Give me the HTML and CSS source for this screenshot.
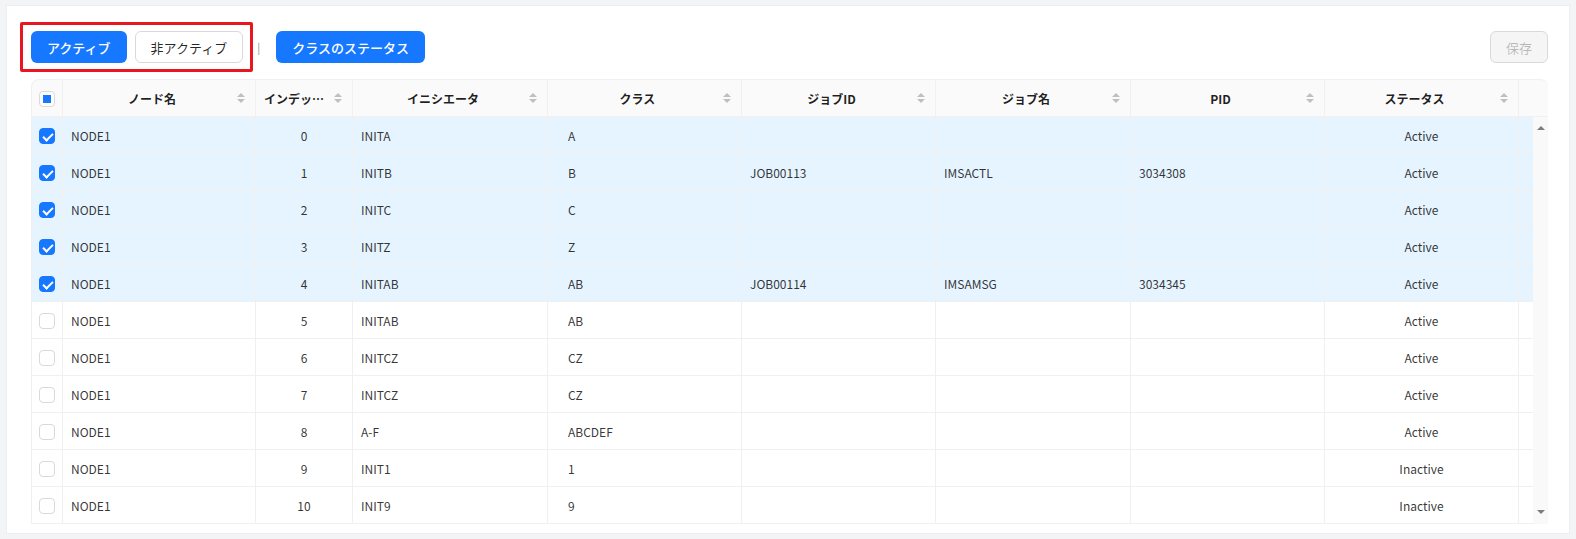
FILE: index.html
```html
<!DOCTYPE html>
<html lang="ja">

<head>
    <meta charset="UTF-8">
    <meta name="viewport" content="width=device-width, initial-scale=1.0">
    <title>イニシエータ一覧</title>
    <link rel="stylesheet" href="styles.css">
</head>

<body>
    <div class="card">
        <div class="toolbar">
            <div class="focus-group">
                <button class="btn btn-primary">アクティブ</button>
                <button class="btn btn-default">非アクティブ</button>
            </div>
            <span class="divider">|</span>
            <button class="btn btn-primary">クラスのステータス</button>
            <button class="btn btn-disabled save-button" disabled>保存</button>
        </div>

        <div class="table-wrap">
            <table class="grid grid-head">
                <colgroup>
                    <col class="c-check"><col class="c-node"><col class="c-index"><col class="c-wide"><col class="c-mid">
                    <col class="c-mid"><col class="c-wide"><col class="c-mid"><col class="c-mid"><col class="c-gutter">
                </colgroup>
                <thead>
                    <tr>
                        <th class="check-cell"><span class="checkbox indeterminate"></span></th>
                        <th><div class="th-inner"><span class="th-title">ノード名</span><span class="sorter"></span></div></th>
                        <th><div class="th-inner"><span class="th-title">インデックス</span><span class="sorter"></span></div></th>
                        <th><div class="th-inner"><span class="th-title">イニシエータ</span><span class="sorter"></span></div></th>
                        <th><div class="th-inner"><span class="th-title">クラス</span><span class="sorter"></span></div></th>
                        <th><div class="th-inner"><span class="th-title">ジョブID</span><span class="sorter"></span></div></th>
                        <th><div class="th-inner"><span class="th-title">ジョブ名</span><span class="sorter"></span></div></th>
                        <th><div class="th-inner"><span class="th-title">PID</span><span class="sorter"></span></div></th>
                        <th><div class="th-inner"><span class="th-title">ステータス</span><span class="sorter"></span></div></th>
                        <th class="gutter"></th>
                    </tr>
                </thead>
            </table>

            <div class="body-wrap">
                <table class="grid grid-body">
                    <colgroup>
                        <col class="c-check"><col class="c-node"><col class="c-index"><col class="c-wide"><col class="c-mid">
                        <col class="c-mid"><col class="c-wide"><col class="c-mid"><col class="c-mid"><col class="c-fill">
                    </colgroup>
                    <tbody>
                        <tr class="selected"><td class="check-cell"><span class="checkbox checked"></span></td><td>NODE1</td><td class="center">0</td><td>INITA</td><td class="class-cell">A</td><td></td><td></td><td></td><td class="center">Active</td><td class="fill"></td></tr>
                        <tr class="selected"><td class="check-cell"><span class="checkbox checked"></span></td><td>NODE1</td><td class="center">1</td><td>INITB</td><td class="class-cell">B</td><td>JOB00113</td><td>IMSACTL</td><td>3034308</td><td class="center">Active</td><td class="fill"></td></tr>
                        <tr class="selected"><td class="check-cell"><span class="checkbox checked"></span></td><td>NODE1</td><td class="center">2</td><td>INITC</td><td class="class-cell">C</td><td></td><td></td><td></td><td class="center">Active</td><td class="fill"></td></tr>
                        <tr class="selected"><td class="check-cell"><span class="checkbox checked"></span></td><td>NODE1</td><td class="center">3</td><td>INITZ</td><td class="class-cell">Z</td><td></td><td></td><td></td><td class="center">Active</td><td class="fill"></td></tr>
                        <tr class="selected"><td class="check-cell"><span class="checkbox checked"></span></td><td>NODE1</td><td class="center">4</td><td>INITAB</td><td class="class-cell">AB</td><td>JOB00114</td><td>IMSAMSG</td><td>3034345</td><td class="center">Active</td><td class="fill"></td></tr>
                        <tr><td class="check-cell"><span class="checkbox"></span></td><td>NODE1</td><td class="center">5</td><td>INITAB</td><td class="class-cell">AB</td><td></td><td></td><td></td><td class="center">Active</td><td class="fill"></td></tr>
                        <tr><td class="check-cell"><span class="checkbox"></span></td><td>NODE1</td><td class="center">6</td><td>INITCZ</td><td class="class-cell">CZ</td><td></td><td></td><td></td><td class="center">Active</td><td class="fill"></td></tr>
                        <tr><td class="check-cell"><span class="checkbox"></span></td><td>NODE1</td><td class="center">7</td><td>INITCZ</td><td class="class-cell">CZ</td><td></td><td></td><td></td><td class="center">Active</td><td class="fill"></td></tr>
                        <tr><td class="check-cell"><span class="checkbox"></span></td><td>NODE1</td><td class="center">8</td><td>A-F</td><td class="class-cell">ABCDEF</td><td></td><td></td><td></td><td class="center">Active</td><td class="fill"></td></tr>
                        <tr><td class="check-cell"><span class="checkbox"></span></td><td>NODE1</td><td class="center">9</td><td>INIT1</td><td class="class-cell">1</td><td></td><td></td><td></td><td class="center">Inactive</td><td class="fill"></td></tr>
                        <tr><td class="check-cell"><span class="checkbox"></span></td><td>NODE1</td><td class="center">10</td><td>INIT9</td><td class="class-cell">9</td><td></td><td></td><td></td><td class="center">Inactive</td><td class="fill"></td></tr>
                    </tbody>
                </table>
                <div class="scrollbar">
                    <span class="arrow up"></span>
                    <span class="arrow down"></span>
                </div>
            </div>
        </div>
    </div>
</body>

</html>
```

FILE: styles.css
```css
body {
    margin: 0;
    padding: 5px 6px;
    background-color: #f3f4f6;
    font-family: "Noto Sans CJK JP", "Noto Sans", sans-serif;
    color: rgba(0, 0, 0, 0.85);
}

.card {
    background-color: #fff;
    border: 1px solid #eceef1;
    padding: 16px 21px 9px 24px;
}

.toolbar {
    display: flex;
    align-items: center;
}

.focus-group {
    display: flex;
    gap: 8px;
    border: 3px solid #e8161f;
    border-radius: 2px;
    padding: 6px 7px 6px 8px;
    margin-left: -11px;
}

.divider {
    color: #8c8c8c;
    font-size: 11px;
    margin: 0 16px 0 4px;
}

.btn {
    height: 32px;
    padding: 0 15px;
    font-family: inherit;
    font-size: 13px;
    border-radius: 6px;
    border: 1px solid transparent;
    cursor: pointer;
}

.btn-primary {
    background-color: #1677ff;
    color: #fff;
    font-weight: 500;
}

.btn-default {
    background-color: #fff;
    border-color: #d9d9d9;
    color: rgba(0, 0, 0, 0.85);
}

.btn-disabled {
    background-color: #f5f5f5;
    border-color: #d9d9d9;
    color: rgba(0, 0, 0, 0.25);
    cursor: not-allowed;
}

.save-button {
    margin-left: auto;
}

.table-wrap {
    margin-top: 7px;
}

.grid {
    border-collapse: separate;
    border-spacing: 0;
    table-layout: fixed;
    font-size: 12px;
}

.grid-head {
    width: 1517px;
}

.grid-body {
    width: 1502px;
}

.c-check { width: 32px; }
.c-node { width: 193px; }
.c-index { width: 97px; }
.c-wide { width: 195px; }
.c-mid { width: 194px; }
.c-gutter { width: 29px; }
.c-fill { width: 14px; }

.grid th {
    height: 36px;
    padding: 0 10px 0 8px;
    background-color: #fafafa;
    font-weight: 700;
    color: rgba(0, 0, 0, 0.88);
    border-top: 1px solid #f0f0f0;
    border-right: 1px solid #f0f0f0;
    border-bottom: 1px solid #f0f0f0;
}

.grid th:first-child {
    border-left: 1px solid #f0f0f0;
    border-top-left-radius: 8px;
}

.grid th.gutter {
    border-right: none;
    border-top-right-radius: 8px;
}

.grid th.check-cell {
    padding: 0;
}

.th-inner {
    display: flex;
    align-items: center;
}

.th-title {
    flex: 1;
    text-align: center;
    white-space: nowrap;
    overflow: hidden;
    text-overflow: ellipsis;
}

.sorter {
    position: relative;
    width: 8px;
    height: 10px;
    margin-left: 4px;
}

.sorter::before,
.sorter::after {
    content: "";
    position: absolute;
    left: 0;
    border-left: 4px solid transparent;
    border-right: 4px solid transparent;
}

.sorter::before {
    top: 0;
    border-bottom: 4px solid #bfbfbf;
}

.sorter::after {
    bottom: 0;
    border-top: 4px solid #bfbfbf;
}

.body-wrap {
    display: flex;
}

.grid td {
    height: 36px;
    padding: 0 8px;
    border-right: 1px solid #f0f0f0;
    border-bottom: 1px solid #f0f0f0;
    color: rgba(0, 0, 0, 0.8);
    white-space: nowrap;
}

.grid td:first-child {
    border-left: 1px solid #f0f0f0;
}

.grid td.fill {
    padding: 0;
    border-right: none;
}

.grid td.check-cell {
    padding: 0;
    text-align: center;
}

.grid td.class-cell {
    padding-left: 20px;
}

.grid td.center {
    text-align: center;
}

.grid tr.selected td {
    background-color: #e6f4ff;
}

.checkbox {
    display: inline-block;
    vertical-align: middle;
    position: relative;
    width: 16px;
    height: 16px;
    box-sizing: border-box;
    border: 1px solid #d9d9d9;
    border-radius: 4px;
    background-color: #fff;
}

.checkbox.checked {
    background-color: #1677ff;
    border-color: #1677ff;
}

.checkbox.checked::after {
    content: "";
    position: absolute;
    left: 4.5px;
    top: 2px;
    width: 4px;
    height: 8px;
    border: solid #fff;
    border-width: 0 2px 2px 0;
    transform: rotate(45deg);
}

.checkbox.indeterminate::after {
    content: "";
    position: absolute;
    left: 3px;
    top: 3px;
    width: 8px;
    height: 8px;
    background-color: #1677ff;
}

.scrollbar {
    width: 15px;
    background-color: #f9f9f9;
    display: flex;
    flex-direction: column;
    justify-content: space-between;
    align-items: center;
    padding: 9px 0 10px;
    box-sizing: border-box;
}

.arrow {
    width: 0;
    height: 0;
    border-left: 4px solid transparent;
    border-right: 4px solid transparent;
}

.arrow.up {
    border-bottom: 4px solid #7d7d7d;
}

.arrow.down {
    border-top: 4px solid #7d7d7d;
}
```
